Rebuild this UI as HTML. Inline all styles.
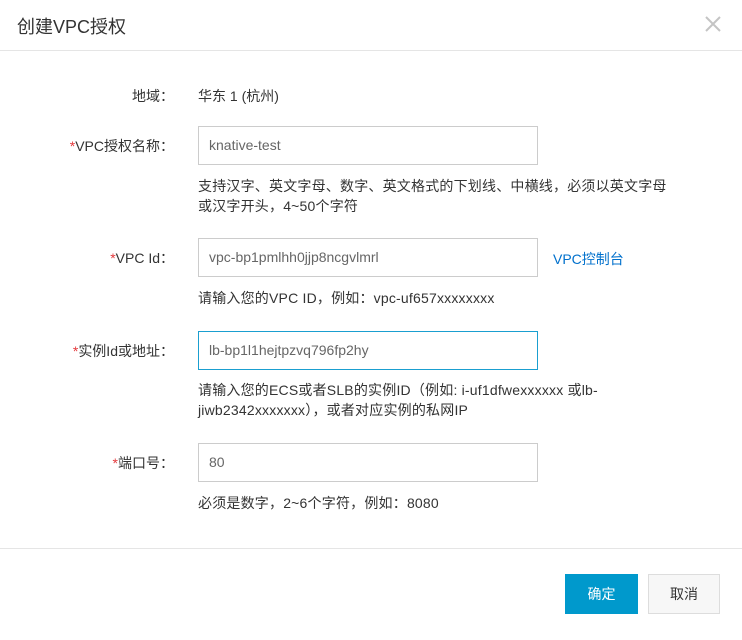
<!DOCTYPE html>
<html><head><meta charset="utf-8"><style>
*{margin:0;padding:0;box-sizing:border-box}
body{width:742px;height:640px;background:#fff;font-family:"Liberation Sans","Noto Sans CJK SC",sans-serif;color:#333;font-size:14px;position:relative;overflow:hidden}
.a{position:absolute;white-space:nowrap}
.title{left:17px;top:13px;font-size:18px;color:#333}
.hl{left:0;width:742px;height:1px;background:#e5e5e5}
.lab{right:568px;text-align:right}
.r{color:#e4393c}
.inp{position:absolute;left:198px;width:340px;height:39px;border:1px solid #ccc;padding-left:10px;line-height:37px;color:#666;font-size:14px}
.help{left:198px;line-height:20px;letter-spacing:0.2px}
.btn{position:absolute;top:574px;height:40px;width:73px;text-align:center;line-height:40px;font-size:14px}
</style></head><body>
<div class="a title">创建VPC授权</div>
<svg class="a" style="left:705px;top:16px" width="16" height="16" viewBox="0 0 16 16"><path d="M1 1L15 15M15 1L1 15" stroke="#c4c4c4" stroke-width="2"/></svg>
<div class="a hl" style="top:50px"></div>

<div class="a lab" style="top:86px">地域：</div>
<div class="a" style="left:198px;top:86px">华东 1 (杭州)</div>

<div class="a lab" style="top:136px"><span class="r">*</span>VPC授权名称：</div>
<div class="inp" style="top:126px">knative-test</div>
<div class="a help" style="top:176px">支持汉字、英文字母、数字、英文格式的下划线、中横线，必须以英文字母<br>或汉字开头，4~50个字符</div>

<div class="a lab" style="top:248px"><span class="r">*</span>VPC Id：</div>
<div class="inp" style="top:238px">vpc-bp1pmlhh0jjp8ncgvlmrl</div>
<div class="a" style="left:553px;top:249px;color:#0070cc;font-size:14px">VPC控制台</div>
<div class="a help" style="top:288px">请输入您的VPC ID，例如：vpc-uf657xxxxxxxx</div>

<div class="a lab" style="top:341px"><span class="r">*</span>实例Id或地址：</div>
<div class="inp" style="top:331px;border-color:#1a9fd0">lb-bp1l1hejtpzvq796fp2hy</div>
<div class="a help" style="top:380px">请输入您的ECS或者SLB的实例ID（例如: i-uf1dfwexxxxxx 或lb-<br>jiwb2342xxxxxxx），或者对应实例的私网IP</div>

<div class="a lab" style="top:453px"><span class="r">*</span>端口号：</div>
<div class="inp" style="top:443px">80</div>
<div class="a help" style="top:493px">必须是数字，2~6个字符，例如：8080</div>

<div class="a hl" style="top:548px"></div>
<div class="btn" style="left:565px;background:#0099cc;color:#fff">确定</div>
<div class="btn" style="left:648px;width:72px;background:#f7f7f7;border:1px solid #ddd;line-height:38px;color:#333">取消</div>
</body></html>
